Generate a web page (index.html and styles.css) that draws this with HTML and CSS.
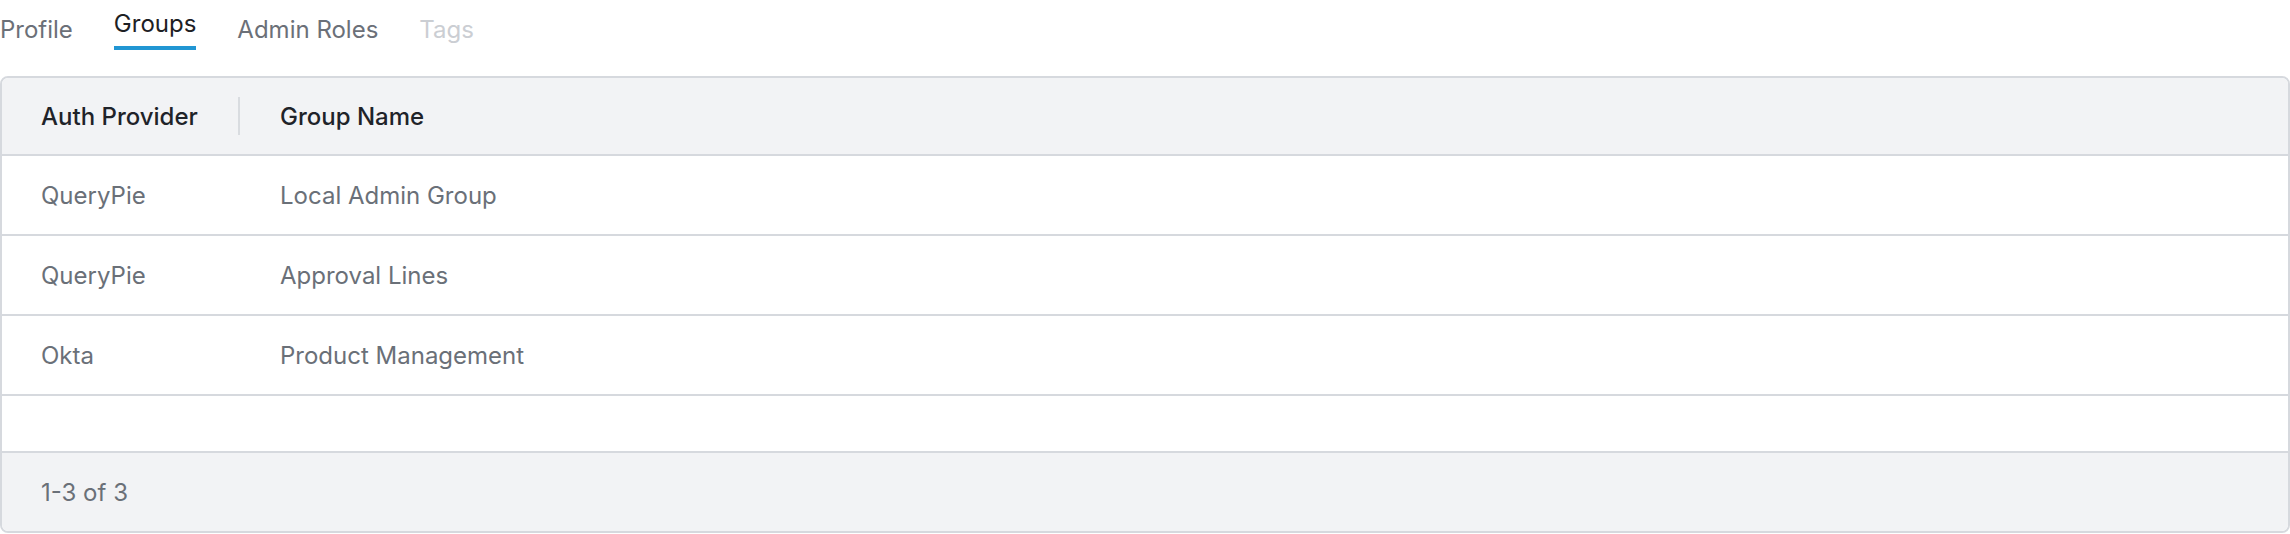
FILE: index.html
```html
<!DOCTYPE html>
<html>
<head>
<meta charset="utf-8">
<link rel="stylesheet" href="styles.css">
</head>
<body>
<nav class="tabs">
  <div class="tab">Profile</div>
  <div class="tab active">Groups</div>
  <div class="tab">Admin Roles</div>
  <div class="tab disabled">Tags</div>
</nav>
<div class="table">
  <div class="row head">
    <div class="cell c1"><span>Auth Provider</span><i class="sep"></i></div>
    <div class="cell c2">Group Name</div>
  </div>
  <div class="row">
    <div class="cell c1">QueryPie</div>
    <div class="cell c2">Local Admin Group</div>
  </div>
  <div class="row">
    <div class="cell c1">QueryPie</div>
    <div class="cell c2">Approval Lines</div>
  </div>
  <div class="row">
    <div class="cell c1">Okta</div>
    <div class="cell c2">Product Management</div>
  </div>
  <div class="row empty"></div>
  <div class="footer">1-3 of 3</div>
</div>
</body>
</html>
```
FILE: styles.css
```css
* { box-sizing: border-box; }
html, body { margin: 0; padding: 0; background: #fff; }
body {
  font-family: Inter, "Noto Sans", sans-serif;
  font-size: 24px;
  width: 2290px;
  height: 534px;
  overflow: hidden;
}
.tabs {
  display: flex;
  align-items: flex-start;
  gap: 41px;
  height: 50px;
}
.tab {
  padding-top: 12px;
  line-height: 36px;
  height: 50px;
  color: #6b7078;
}
.tab.active {
  padding-top: 6px;
  color: #1d2024;
  border-bottom: 4px solid #2196d3;
}
.tab.disabled { color: #cbced3; }
.table {
  margin-top: 26px;
  width: 2290px;
  border: 2px solid #d6d9de;
  border-radius: 8px;
  overflow: hidden;
}
.row {
  display: flex;
  height: 80px;
  border-bottom: 2px solid #d6d9de;
  background: #fff;
}
.row.head {
  height: 78px;
  background: #f2f3f5;
}
.row.empty { height: 57px; }
.cell {
  display: flex;
  align-items: center;
  color: #6a7078;
}
.head .cell {
  color: #1f2329;
  font-weight: 500;
}
.c1 {
  width: 237px;
  padding-left: 39px;
  position: relative;
}
.c2 {
  flex: 1;
  padding-left: 41px;
}
.sep {
  position: absolute;
  right: -1px;
  top: 19px;
  width: 2px;
  height: 38px;
  background: #d9dce0;
}
.footer {
  height: 78px;
  background: #f2f3f5;
  display: flex;
  align-items: center;
  padding-left: 39px;
  color: #6a7078;
}
```
